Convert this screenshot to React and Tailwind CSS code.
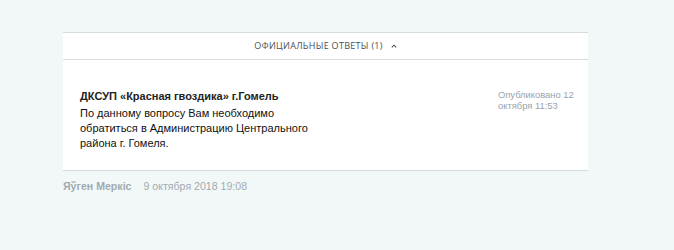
import React from 'react';

function AnswersHeader() {
  return (
    <div className="flex h-[27px] items-center justify-center border-b border-[#d5dcdc]">
      <span className="font-['Open_Sans',sans-serif] text-[9px] uppercase tracking-[0.3px] text-[#4a4f55]">
        Официальные ответы (1)
      </span>
      <svg className="ml-[8px] mt-[-1px]" width="6" height="4" viewBox="0 0 6 4">
        <path d="M0.8 3.4 L3 1.2 L5.2 3.4" fill="none" stroke="#4a4f55" strokeWidth="1.1" />
      </svg>
    </div>
  );
}

function Answer() {
  return (
    <div className="flex justify-between pl-[17px] pr-[12px] pt-[29px] pb-[19px]">
      <div className="w-[240px]">
        <div className="text-[11px] font-bold leading-[14px] text-[#222]">ДКСУП «Красная гвоздика» г.Гомель</div>
        <p className="mt-[3px] text-[11px] leading-[15px] text-[#111]">
          По данному вопросу Вам необходимо обратиться в Администрацию Центрального района г. Гомеля.
        </p>
      </div>
      <div className="w-[78px] text-[9.4px] leading-[11px] text-[#9aa3ab]">Опубликовано 12 октября 11:53</div>
    </div>
  );
}

export default function App() {
  return (
    <div className="min-h-[250px] bg-[#f2f8f8] pt-[32px] font-['Liberation_Sans',Arial,sans-serif]">
      <div className="ml-[63px] w-[525px]">
        <div className="border-y border-[#d5dcdc] bg-white">
          <AnswersHeader />
          <Answer />
        </div>
        <div className="mt-[8px] flex items-baseline gap-[12px] leading-[14px] text-[#a2aab0]">
          <span className="text-[10.6px] font-bold">Яўген Меркіс</span>
          <span className="text-[10.6px]">9 октября 2018 19:08</span>
        </div>
      </div>
    </div>
  );
}
